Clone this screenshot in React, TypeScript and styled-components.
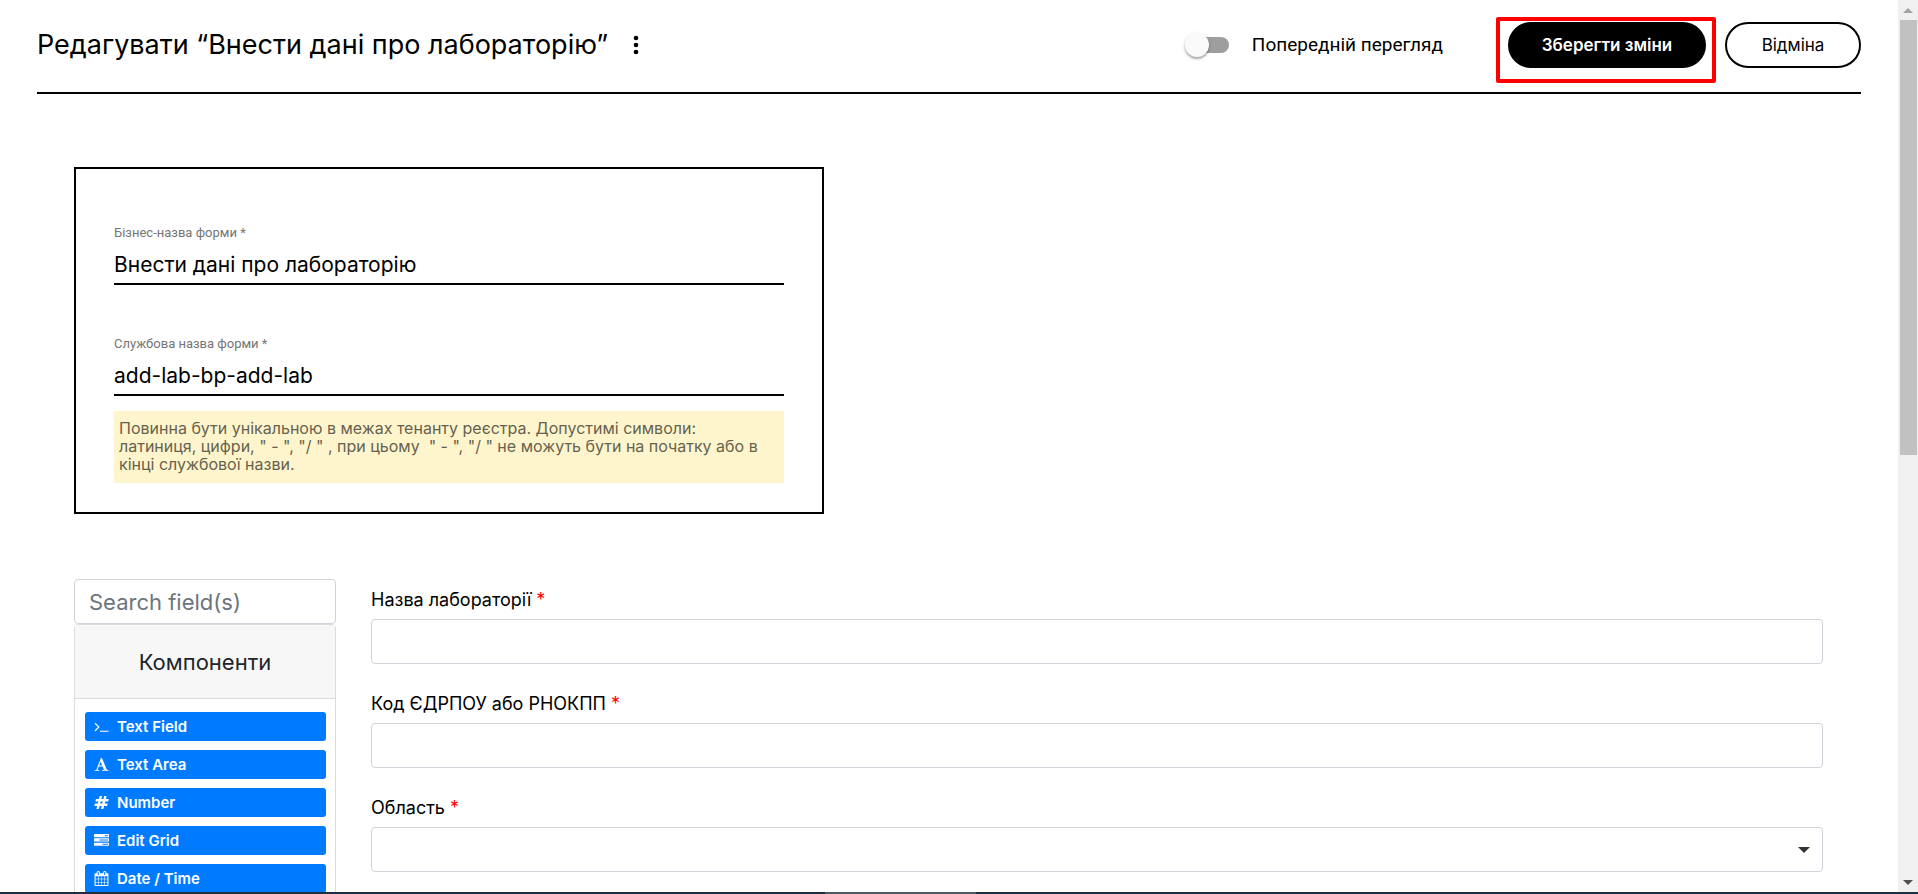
import React, { useState } from 'react';
import styled, { createGlobalStyle } from 'styled-components';

const GlobalStyle = createGlobalStyle`
  *, *::before, *::after { box-sizing: border-box; }
  body { margin: 0; background: #fff; color: #000; font-family: Inter, "Noto Sans", sans-serif; }
  button, input, select { font-family: inherit; margin: 0; }
`;

const Screen = styled.div`
  display: grid;
  grid-template: minmax(0, 1fr) 2px / minmax(0, 1fr) 20px;
  height: 100vh;
`;

const Page = styled.main`
  overflow: hidden;
  padding: 0 37px;
`;

const Header = styled.header`
  display: flex;
  align-items: center;
  justify-content: space-between;
  height: 94px;
  padding-bottom: 2px;
  border-bottom: 2px solid #000;
`;

const TitleGroup = styled.div`
  display: flex;
  align-items: center;
  gap: 16px;
`;

const Title = styled.h1`
  margin: 0;
  font-size: 27px;
  line-height: 32px;
  font-weight: 400;
`;

const IconButton = styled.button`
  display: flex;
  padding: 0;
  border: 0;
  background: none;
  cursor: pointer;
`;

const Actions = styled.div`
  display: flex;
  align-items: center;
`;

const ToggleLabel = styled.label`
  display: flex;
  align-items: center;
  gap: 23px;
  margin-right: 65px;
  font-size: 19px;
  line-height: 24px;
  font-family: Roboto, sans-serif;
`;

const Toggle = styled.input`
  appearance: none;
  display: grid;
  align-items: center;
  width: 44px;
  height: 24px;
  margin: 0;
  &::before, &::after {
    content: '';
    grid-area: 1 / 1;
  }
  &::before {
    justify-self: end;
    width: 40px;
    height: 16px;
    border-radius: 8px;
    background: #9e9e9e;
  }
  &::after {
    width: 24px;
    height: 24px;
    border-radius: 50%;
    background: #fafafa;
    box-shadow: 0 2px 2px rgba(0, 0, 0, 0.28), 0 1px 4px rgba(0, 0, 0, 0.12);
  }
  &:checked::before { justify-self: start; }
  &:checked::after { justify-self: end; }
`;

const PillButton = styled.button<{ $primary?: boolean }>`
  min-width: ${p => (p.$primary ? 198 : 136)}px;
  height: 46px;
  padding: 0 24px;
  border: 2px solid #000;
  border-radius: 23px;
  background: ${p => (p.$primary ? '#000' : '#fff')};
  color: ${p => (p.$primary ? '#fff' : '#000')};
  font-size: 17px;
  line-height: 20px;
  font-weight: ${p => (p.$primary ? 600 : 400)};
  cursor: pointer;
`;

const Highlight = styled.div`
  position: relative;
  margin-right: 19px;
  &::after {
    content: '';
    position: absolute;
    inset: -5px -10px -15px -12px;
    border: 4px solid #ff0000;
    border-radius: 2px;
    pointer-events: none;
  }
`;

const Content = styled.div`
  padding: 73px 38px 0 37px;
`;

const NameCard = styled.section`
  max-width: 750px;
  padding: 56px 38px 29px;
  border: 2px solid #000;
`;

const NameFields = styled.div`
  display: flex;
  flex-direction: column;
  gap: 51px;
`;

const NameField = styled.div`
  display: flex;
  flex-direction: column;
`;

const NameLabel = styled.label`
  font-family: Roboto, sans-serif;
  font-size: 13px;
  line-height: 16px;
  color: #757575;
`;

const NameInput = styled.input`
  width: 100%;
  height: 44px;
  padding: 5px 0 0;
  border: 0;
  border-bottom: 2px solid #000;
  outline: 0;
  background: none;
  color: #000;
  font-size: 21px;
`;

const Hint = styled.p`
  margin: 15px 0 0;
  padding: 8px 16px 10px 5px;
  background: #fff5cc;
  color: #66624f;
  font-size: 16px;
  line-height: 18px;
`;

const Builder = styled.div`
  display: grid;
  grid-template-columns: 262px minmax(0, 1fr);
  gap: 35px;
  margin-top: 65px;
`;

const Search = styled.input`
  display: block;
  width: 100%;
  height: 45px;
  padding: 0 14px;
  border: 1px solid #ced4da;
  border-radius: 4px;
  outline: 0;
  font-size: 22px;
  &::placeholder { color: #6c757d; opacity: 1; }
`;

const Palette = styled.section`
  border: 1px solid #dcdcdc;
  border-radius: 4px;
`;

const PaletteTitle = styled.h2`
  display: flex;
  align-items: center;
  justify-content: center;
  height: 74px;
  margin: 0;
  border-bottom: 1px solid #dcdcdc;
  background: #f7f7f7;
  color: #212529;
  font-size: 22px;
  font-weight: 400;
`;

const PaletteList = styled.div`
  display: flex;
  flex-direction: column;
  gap: 9px;
  padding: 13px 9px 13px 10px;
`;

const PaletteItem = styled.button`
  display: flex;
  align-items: center;
  gap: 8px;
  height: 29px;
  padding: 0 9px;
  border: 0;
  border-radius: 3px;
  background: #007bff;
  color: #fff;
  font-size: 15px;
  line-height: 20px;
  font-weight: 600;
  cursor: grab;
`;

const Fields = styled.form`
  display: flex;
  flex-direction: column;
  gap: 28px;
  padding-top: 9px;
`;

const Field = styled.div`
  display: flex;
  flex-direction: column;
  gap: 7px;
`;

const FieldLabel = styled.label`
  font-size: 18px;
  line-height: 24px;
`;

const Required = styled.span`
  color: #ff0000;
`;

const fieldBox = `
  width: 100%;
  height: 45px;
  padding: 0 14px;
  border: 1px solid #ced4da;
  border-radius: 4px;
  outline: 0;
  background: #fff;
  font-size: 18px;
`;

const TextInput = styled.input`${fieldBox}`;

const SelectWrap = styled.div`
  display: grid;
  align-items: center;
  & > * { grid-area: 1 / 1; }
  & > svg { justify-self: end; margin-right: 13px; pointer-events: none; }
`;

const Select = styled.select`
  ${fieldBox}
  appearance: none;
`;

const Scrollbar = styled.div`
  display: grid;
  grid-template-rows: 20px minmax(0, 1fr) 20px;
  background: #f0f0f0;
`;

const ScrollArrow = styled.div`
  display: flex;
  align-items: center;
  justify-content: center;
`;

const ScrollTrack = styled.div`
  padding: 0 1px 0 2px;
`;

const Thumb = styled.div`
  height: 51%;
  background: #c1c1c1;
`;

const Taskbar = styled.div`
  grid-column: 1 / -1;
  display: grid;
  grid-template-columns: 43% 151px 1fr;
  background: #1d3040;
`;

const TaskbarActive = styled.div`
  grid-column: 2;
  background: #4a5a65;
`;

const palette = [
  {
    label: 'Text Field',
    path: 'M649 983l-466 466q-10 10-23 10t-23-10l-50-50q-10-10-10-23t10-23l393-393-393-393q-10-10-10-23t10-23l50-50q10-10 23-10t23 10l466 466q10 10 10 23t-10 23zm1079 457v64q0 14-9 23t-23 9h-960q-14 0-23-9t-9-23v-64q0-14 9-23t23-9h960q14 0 23 9t9 23z',
  },
  {
    label: 'Text Area',
    path: 'M789 559l-170 450q33 0 136.500 2t160.500 2q19 0 57-2-87-253-184-452zm-725 1105l2-79q23-7 56-12.500t57-10.500 49.500-14.500 44.500-29 31-50.500l237-616 280-724h128q8 14 11 21l205 480q33 78 106 257.500t114 274.500q15 34 58 144.500t72 168.500q20 45 35 57 19 15 88 29.500t84 20.500q6 38 6 57 0 5-.5 13.500t-.5 12.500q-63 0-190-8t-191-8q-76 0-215 7t-178 8q0-43 4-78l131-28q1 0 12.500-2.500t15.500-3.500 14.500-4.500 15-6.500 11-8 9-11 2.500-14q0-16-31-96.500t-72-177.500-42-100l-450-2q-26 58-76.500 195.500t-50.500 162.500q0 22 14 37.500t43.500 24.500 48.500 13.500 57 8.500 41 4q1 19 1 58 0 9-2 27-58 0-174.500-10t-174.500-10q-8 0-26.500 4t-21.500 4q-80 14-188 14z',
  },
  {
    label: 'Number',
    path: 'M991 1024l64-256h-254l-64 256h254zm768-504l-56 224q-7 24-31 24h-327l-64 256h311q15 0 25 12 10 14 6 28l-56 224q-5 24-31 24h-327l-81 328q-7 24-31 24h-224q-16 0-26-12-9-12-6-28l78-312h-254l-81 328q-7 24-31 24h-225q-15 0-25-12-9-12-6-28l78-312h-311q-15 0-25-12-9-12-6-28l56-224q7-24 31-24h327l64-256h-311q-15 0-25-12-10-14-6-28l56-224q5-24 31-24h327l81-328q7-24 32-24h224q15 0 25 12 9 12 6 28l-78 312h254l81-328q7-24 32-24h224q15 0 25 12 9 12 6 28l-78 312h311q15 0 25 12 9 12 6 28z',
  },
  {
    label: 'Edit Grid',
    path: 'M1024 1408h640v-128h-640v128zm-384-512h1024v-128h-1024v128zm640-512h384v-128h-384v128zm512 832v256q0 26-19 45t-45 19h-1664q-26 0-45-19t-19-45v-256q0-26 19-45t45-19h1664q26 0 45 19t19 45zm0-512v256q0 26-19 45t-45 19h-1664q-26 0-45-19t-19-45v-256q0-26 19-45t45-19h1664q26 0 45 19t19 45zm0-512v256q0 26-19 45t-45 19h-1664q-26 0-45-19t-19-45v-256q0-26 19-45t45-19h1664q26 0 45 19t19 45z',
  },
  {
    label: 'Date / Time',
    path: 'M192 1664h288v-288h-288v288zm352 0h320v-288h-320v288zm-352-352h288v-320h-288v320zm352 0h320v-320h-320v320zm-352-384h288v-288h-288v288zm736 736h320v-288h-320v288zm-384-736h320v-288h-320v288zm768 736h288v-288h-288v288zm-384-352h320v-320h-320v320zm-352-864v-288q0-13-9.500-22.500t-22.500-9.500h-64q-13 0-22.500 9.500t-9.500 22.500v288q0 13 9.500 22.500t22.500 9.500h64q13 0 22.500-9.500t9.500-22.500zm736 864h288v-320h-288v320zm-384-384h320v-288h-320v288zm384 0h288v-288h-288v288zm32-480v-288q0-13-9.500-22.500t-22.500-9.500h-64q-13 0-22.500 9.500t-9.500 22.500v288q0 13 9.500 22.500t22.500 9.500h64q13 0 22.500-9.500t9.500-22.500zm384-64v1280q0 52-38 90t-90 38h-1408q-52 0-90-38t-38-90v-1280q0-52 38-90t90-38h128v-96q0-66 47-113t113-47h64q66 0 113 47t47 113v96h384v-96q0-66 47-113t113-47h64q66 0 113 47t47 113v96h128q52 0 90 38t38 90z',
  },
];

export default function App() {
  const [preview, setPreview] = useState(false);
  const [title, setTitle] = useState('Внести дані про лабораторію');
  const [name, setName] = useState('add-lab-bp-add-lab');

  return (
    <>
      <GlobalStyle />
      <Screen>
        <Page>
          <Header>
            <TitleGroup>
              <Title>Редагувати “Внести дані про лабораторію”</Title>
              <IconButton type="button" aria-label="Меню">
                <svg width="24" height="24" viewBox="0 0 24 24" fill="#000">
                  <circle cx="12" cy="5" r="2.300" />
                  <circle cx="12" cy="12" r="2.300" />
                  <circle cx="12" cy="19" r="2.300" />
                </svg>
              </IconButton>
            </TitleGroup>
            <Actions>
              <ToggleLabel>
                <Toggle type="checkbox" checked={preview} onChange={e => setPreview(e.target.checked)} />
                Попередній перегляд
              </ToggleLabel>
              <Highlight>
                <PillButton type="button" $primary>Зберегти зміни</PillButton>
              </Highlight>
              <PillButton type="button">Відміна</PillButton>
            </Actions>
          </Header>
          <Content>
            <NameCard>
              <NameFields>
                <NameField>
                  <NameLabel htmlFor="form-title">Бізнес-назва форми *</NameLabel>
                  <NameInput id="form-title" value={title} onChange={e => setTitle(e.target.value)} />
                </NameField>
                <NameField>
                  <NameLabel htmlFor="form-name">Службова назва форми *</NameLabel>
                  <NameInput id="form-name" value={name} onChange={e => setName(e.target.value)} />
                </NameField>
              </NameFields>
              <Hint>
                Повинна бути унікальною в межах тенанту реєстра. Допустимі символи: латиниця, цифри, " - ", "/ " , при
                цьому&nbsp; " - ", "/ " не можуть бути на початку або в кінці службової назви.
              </Hint>
            </NameCard>
            <Builder>
              <aside>
                <Search type="search" placeholder="Search field(s)" aria-label="Search field(s)" />
                <Palette>
                  <PaletteTitle>Компоненти</PaletteTitle>
                  <PaletteList>
                    {palette.map(item => (
                      <PaletteItem key={item.label} type="button">
                        <svg width="15" height="15" viewBox="0 0 1792 1792" fill="currentColor" aria-hidden="true">
                          <path d={item.path} />
                        </svg>
                        {item.label}
                      </PaletteItem>
                    ))}
                  </PaletteList>
                </Palette>
              </aside>
              <Fields>
                <Field>
                  <FieldLabel htmlFor="lab">Назва лабораторії <Required>*</Required></FieldLabel>
                  <TextInput id="lab" />
                </Field>
                <Field>
                  <FieldLabel htmlFor="code">Код ЄДРПОУ або РНОКПП <Required>*</Required></FieldLabel>
                  <TextInput id="code" />
                </Field>
                <Field>
                  <FieldLabel htmlFor="region">Область <Required>*</Required></FieldLabel>
                  <SelectWrap>
                    <Select id="region" />
                    <svg width="12" height="6" viewBox="0 0 12 6"><path d="M0 0H12L6 6Z" fill="#333" /></svg>
                  </SelectWrap>
                </Field>
              </Fields>
            </Builder>
          </Content>
        </Page>
        <Scrollbar aria-hidden="true">
          <ScrollArrow>
            <svg width="10" height="5" viewBox="0 0 10 5"><path d="M0 5H10L5 0Z" fill="#a3a3a3" /></svg>
          </ScrollArrow>
          <ScrollTrack><Thumb /></ScrollTrack>
          <ScrollArrow>
            <svg width="10" height="5" viewBox="0 0 10 5"><path d="M0 0H10L5 5Z" fill="#505050" /></svg>
          </ScrollArrow>
        </Scrollbar>
        <Taskbar><TaskbarActive /></Taskbar>
      </Screen>
    </>
  );
}
